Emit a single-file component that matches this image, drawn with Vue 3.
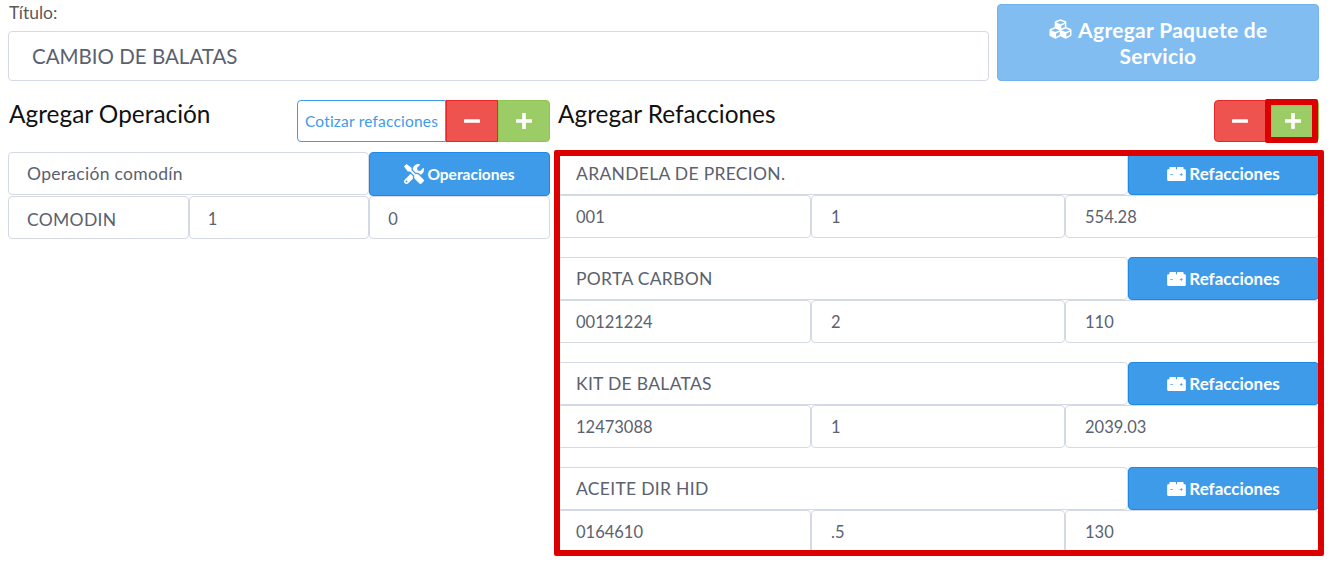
<script setup>
const parts = [
  { name: 'ARANDELA DE PRECION.', code: '001', qty: '1', price: '554.28' },
  { name: 'PORTA CARBON', code: '00121224', qty: '2', price: '110' },
  { name: 'KIT DE BALATAS', code: '12473088', qty: '1', price: '2039.03' },
  { name: 'ACEITE DIR HID', code: '0164610', qty: '.5', price: '130' }
]
const cubes = 'M488.6 250.2L392 214V105.5c0-15-9.3-28.4-23.4-33.7l-100-37.5c-8.1-3.1-17.1-3.1-25.3 0l-100 37.5c-14.1 5.3-23.4 18.7-23.4 33.7V214l-96.6 36.2C9.3 255.5 0 268.9 0 283.9V394c0 13.6 7.7 26.1 19.9 32.2l100 50c10.1 5.1 22.1 5.1 32.2 0l103.9-52 103.9 52c10.1 5.1 22.1 5.1 32.2 0l100-50c12.2-6.1 19.9-18.6 19.9-32.2V283.9c0-15-9.3-28.4-23.4-33.7zM358 214.8l-85 31.9v-68.2l85-37v73.3zM154 104.1l102-38.2 102 38.2v.6l-102 41.4-102-41.4v-.6zm84 291.1l-85 42.5v-79.1l85-38.8v75.4zm0-112l-102 41.4-102-41.4v-.6l102-38.2 102 38.2v.6zm240 112l-85 42.5v-79.1l85-38.8v75.4zm0-112l-102 41.4-102-41.4v-.6l102-38.2 102 38.2v.6z'
const tools = 'M501.1 395.7L384 278.6c-23.1-23.1-57.6-27.6-85.4-13.9L192 158.1V96L64 0 0 64l96 128h62.1l106.6 106.6c-13.6 27.8-9.2 62.3 13.9 85.4l117.1 117.1c14.6 14.6 38.2 14.6 52.7 0l52.7-52.7c14.5-14.6 14.5-38.2 0-52.7zM331.7 225c28.3 0 54.9 11 74.9 31l19.4 19.4c15.8-6.9 30.8-16.5 43.8-29.5 37.1-37.1 49.7-89.3 37.9-136.7-2.2-9-13.5-12.1-20.1-5.5l-74.4 74.4-67.9-11.3L334 98.9l74.4-74.4c6.6-6.6 3.4-17.9-5.7-20.2-47.4-11.7-99.6.9-136.6 37.9-28.5 28.5-41.9 66.1-41.2 103.6l82.1 82.1c8.1-1.9 16.5-2.9 24.7-2.9zm-103.9 82l-56.7-56.7L18.7 402.8c-25 25-25 65.5 0 90.5s65.5 25 90.5 0l123.6-123.6c-7.6-19.9-9.9-41.6-5-62.7zM64 472c-13.2 0-24-10.8-24-24 0-13.3 10.7-24 24-24s24 10.7 24 24c0 13.2-10.7 24-24 24z'
const battery = 'M32 128h30V80c0-9 7-16 16-16h148c9 0 16 7 16 16v48h28V80c0-9 7-16 16-16h148c9 0 16 7 16 16v48h30c18 0 32 14 32 32v256c0 18-14 32-32 32H32c-18 0-32-14-32-32V160c0-18 14-32 32-32zM86 258v20h70v-20zM346 258v20h30v30h20v-30h30v-20h-30v-30h-20v30z'
</script>

<template>
  <div class="page">
    <div class="top">
      <div class="title-col">
        <label class="label">Título:</label>
        <div class="field title-field">CAMBIO DE BALATAS</div>
      </div>
      <button class="pack">
        <svg class="ic-pack" viewBox="0 0 512 512"><path :d="cubes" fill="currentColor" /></svg>
        Agregar Paquete de Servicio
      </button>
    </div>

    <div class="columns">
      <section class="left">
        <div class="head">
          <h2>Agregar Operación</h2>
          <div class="group">
            <button class="btn quote">Cotizar refacciones</button>
            <button class="btn red">
              <svg viewBox="0 0 16 16"><rect x="0" y="6.2" width="16" height="3.6" rx=".6" fill="currentColor" /></svg>
            </button>
            <button class="btn green">
              <svg viewBox="0 0 16 16"><path d="M6.2 0h3.6v6.2H16v3.6H9.8V16H6.2V9.8H0V6.2h6.2z" fill="currentColor" /></svg>
            </button>
          </div>
        </div>
        <div class="op-row">
          <div class="field">Operación comodín</div>
          <button class="btn blue op-btn">
            <svg class="ic-tools" viewBox="0 0 512 512"><path :d="tools" fill="currentColor" /></svg>
            Operaciones
          </button>
        </div>
        <div class="thirds">
          <div class="field">COMODIN</div>
          <div class="field num">1</div>
          <div class="field num">0</div>
        </div>
      </section>

      <section class="right">
        <div class="head">
          <h2>Agregar Refacciones</h2>
          <div class="group">
            <button class="btn red">
              <svg viewBox="0 0 16 16"><rect x="0" y="6.2" width="16" height="3.6" rx=".6" fill="currentColor" /></svg>
            </button>
            <button class="btn green marked">
              <svg viewBox="0 0 16 16"><path d="M6.2 0h3.6v6.2H16v3.6H9.8V16H6.2V9.8H0V6.2h6.2z" fill="currentColor" /></svg>
            </button>
          </div>
        </div>
        <div class="list">
          <div v-for="p in parts" :key="p.code" class="part">
            <div class="part-top">
              <div class="field">{{ p.name }}</div>
              <button class="btn blue part-btn">
                <svg class="ic-battery" viewBox="0 64 512 384"><path :d="battery" fill="currentColor" fill-rule="evenodd" /></svg>
                Refacciones
              </button>
            </div>
            <div class="thirds">
              <div class="field num">{{ p.code }}</div>
              <div class="field num">{{ p.qty }}</div>
              <div class="field num">{{ p.price }}</div>
            </div>
          </div>
        </div>
      </section>
    </div>
  </div>
</template>

<style scoped>
.page {
  box-sizing: border-box;
  width: 1329px;
  height: 561px;
  overflow: hidden;
  padding: 4px 10px 0 8px;
  background: #fff;
  font-family: Lato, "Noto Sans", sans-serif;
  color: #5b616e;
}
button {
  font-family: inherit;
  cursor: pointer;
}
.top {
  display: flex;
  gap: 8px;
  height: 77px;
}
.title-col {
  width: 981px;
  display: flex;
  flex-direction: column;
}
.label {
  height: 27px;
  margin-left: 1px;
  font-size: 17.5px;
  line-height: 17px;
  color: #5a5a5a;
}
.field {
  box-sizing: border-box;
  display: flex;
  align-items: center;
  min-width: 0;
  height: 43px;
  padding: 0 18px;
  background: #fff;
  border: 1px solid #d5d9e5;
  border-radius: 4px;
  font-size: 17.5px;
  letter-spacing: .3px;
  white-space: nowrap;
}
.right .field {
  padding: 0 19px;
}
.field.num {
  padding-top: 1px;
  font-size: 16.5px;
  letter-spacing: 0;
}
.left .thirds .field {
  padding-top: 3px;
}
.title-field {
  height: 50px;
  padding: 0 23px;
  font-size: 20.5px;
  letter-spacing: 0;
}
.pack {
  flex: 1;
  padding: 0 30px;
  border: 1px solid #71b3ec;
  border-radius: 4px;
  background: #82bdf1;
  color: #fff;
  font-size: 21px;
  font-weight: 700;
  letter-spacing: .3px;
  line-height: 26px;
}
.ic-pack {
  width: 25px;
  height: 22px;
  vertical-align: -2px;
}
.columns {
  display: flex;
  margin-top: 19px;
}
.left {
  width: 542px;
  flex: none;
}
.right {
  margin-left: 6px;
  width: 763px;
  flex: none;
}
.head {
  display: flex;
  justify-content: space-between;
  height: 42px;
  margin-bottom: 10px;
}
h2 {
  margin: 0 0 0 1px;
  font-size: 24.4px;
  font-weight: 400;
  line-height: 28px;
  color: #111;
}
.right h2 {
  margin-left: 2px;
}
.group {
  display: flex;
}
.btn {
  box-sizing: border-box;
  display: flex;
  align-items: center;
  justify-content: center;
  gap: 3px;
  padding: 0;
  border: 1px solid;
  color: #fff;
  font-weight: 700;
}
.btn svg {
  flex: none;
}
.quote {
  width: 149px;
  background: #fff;
  border-color: #3e9be9;
  border-radius: 4px 0 0 4px;
  color: #3e9be9;
  font-size: 15.5px;
  letter-spacing: .2px;
  font-weight: 400;
}
.red {
  width: 52px;
  background: #ef5350;
  border-color: #e5282a;
}
.green {
  position: relative;
  width: 52px;
  background: #9ccc65;
  border-color: #8fc552;
  border-radius: 0 4px 4px 0;
}
.right .green {
  width: 53px;
}
.red svg,
.green svg {
  width: 16px;
  height: 16px;
}
.right .red {
  border-radius: 4px 0 0 4px;
}
.marked::after {
  content: "";
  position: absolute;
  inset: -2px 0 -1.5px -2.5px;
  border: 6px solid #dc0000;
  border-radius: 2px;
}
.blue {
  background: #3e9be9;
  border-color: #1e88e5;
  border-radius: 4px;
}
.op-row {
  display: grid;
  grid-template-columns: 361px 181px;
  height: 44px;
}
.op-btn {
  font-size: 15.5px;
}
.ic-tools {
  width: 20px;
  height: 20px;
}
.thirds {
  display: grid;
  grid-template-columns: repeat(3, 1fr);
}
.right .thirds {
  grid-template-columns: 255px 254px 1fr;
}
.list {
  position: relative;
}
.list::after {
  content: "";
  position: absolute;
  inset: -2px -5px -3px -2.5px;
  border: 6px solid #dc0000;
  border-radius: 2px;
  pointer-events: none;
}
.part {
  margin-bottom: 19px;
}
.part:last-child {
  margin-bottom: 0;
}
.part-top {
  display: grid;
  grid-template-columns: 1fr 191px;
  height: 43px;
}
.part-btn {
  font-size: 17px;
}
.ic-battery {
  width: 19px;
  height: 14px;
}
</style>
